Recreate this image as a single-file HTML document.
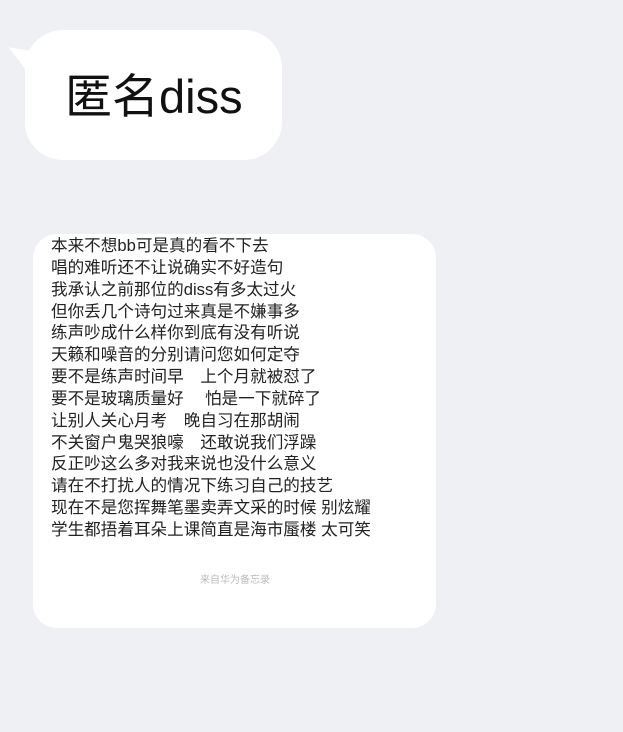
<!DOCTYPE html>
<html><head><meta charset="utf-8"><style>
html,body{margin:0;padding:0;}
body{width:623px;height:732px;background:#eef0f3;position:relative;overflow:hidden;font-family:"Liberation Sans","Noto Sans CJK SC",sans-serif;}
.b1{position:absolute;left:25px;top:30px;width:257px;height:130px;background:#fff;border-radius:38px;}
.tail{position:absolute;left:6px;top:44px;width:0;height:0;border-top:10px solid transparent;border-right:30px solid #fff;border-bottom:14px solid transparent;transform:rotate(28deg);}
.t1{position:absolute;left:65px;top:67px;font-size:47px;line-height:60px;color:#111;white-space:nowrap;}
.card{position:absolute;left:33px;top:234px;width:403px;height:394px;background:#fff;border-radius:24px;}
.lines{position:absolute;left:51px;top:235px;font-size:16.6px;line-height:21.85px;color:#222;white-space:pre;}
.ft{position:absolute;left:0;width:470px;text-align:center;top:571px;font-size:10px;color:#bbb;}
</style></head><body>
<div class="tail"></div>
<div class="b1"></div>
<div class="t1">匿名diss</div>
<div class="card"></div>
<div class="lines">本来不想bb可是真的看不下去
唱的难听还不让说确实不好造句
我承认之前那位的diss有多太过火
但你丢几个诗句过来真是不嫌事多
练声吵成什么样你到底有没有听说
天籁和噪音的分别请问您如何定夺
要不是练声时间早　上个月就被怼了
要不是玻璃质量好　 怕是一下就碎了
让别人关心月考　晚自习在那胡闹
不关窗户鬼哭狼嚎　还敢说我们浮躁
反正吵这么多对我来说也没什么意义
请在不打扰人的情况下练习自己的技艺
现在不是您挥舞笔墨卖弄文采的时候 别炫耀
学生都捂着耳朵上课简直是海市蜃楼 太可笑</div>
<div class="ft">来自华为备忘录</div>
</body></html>
